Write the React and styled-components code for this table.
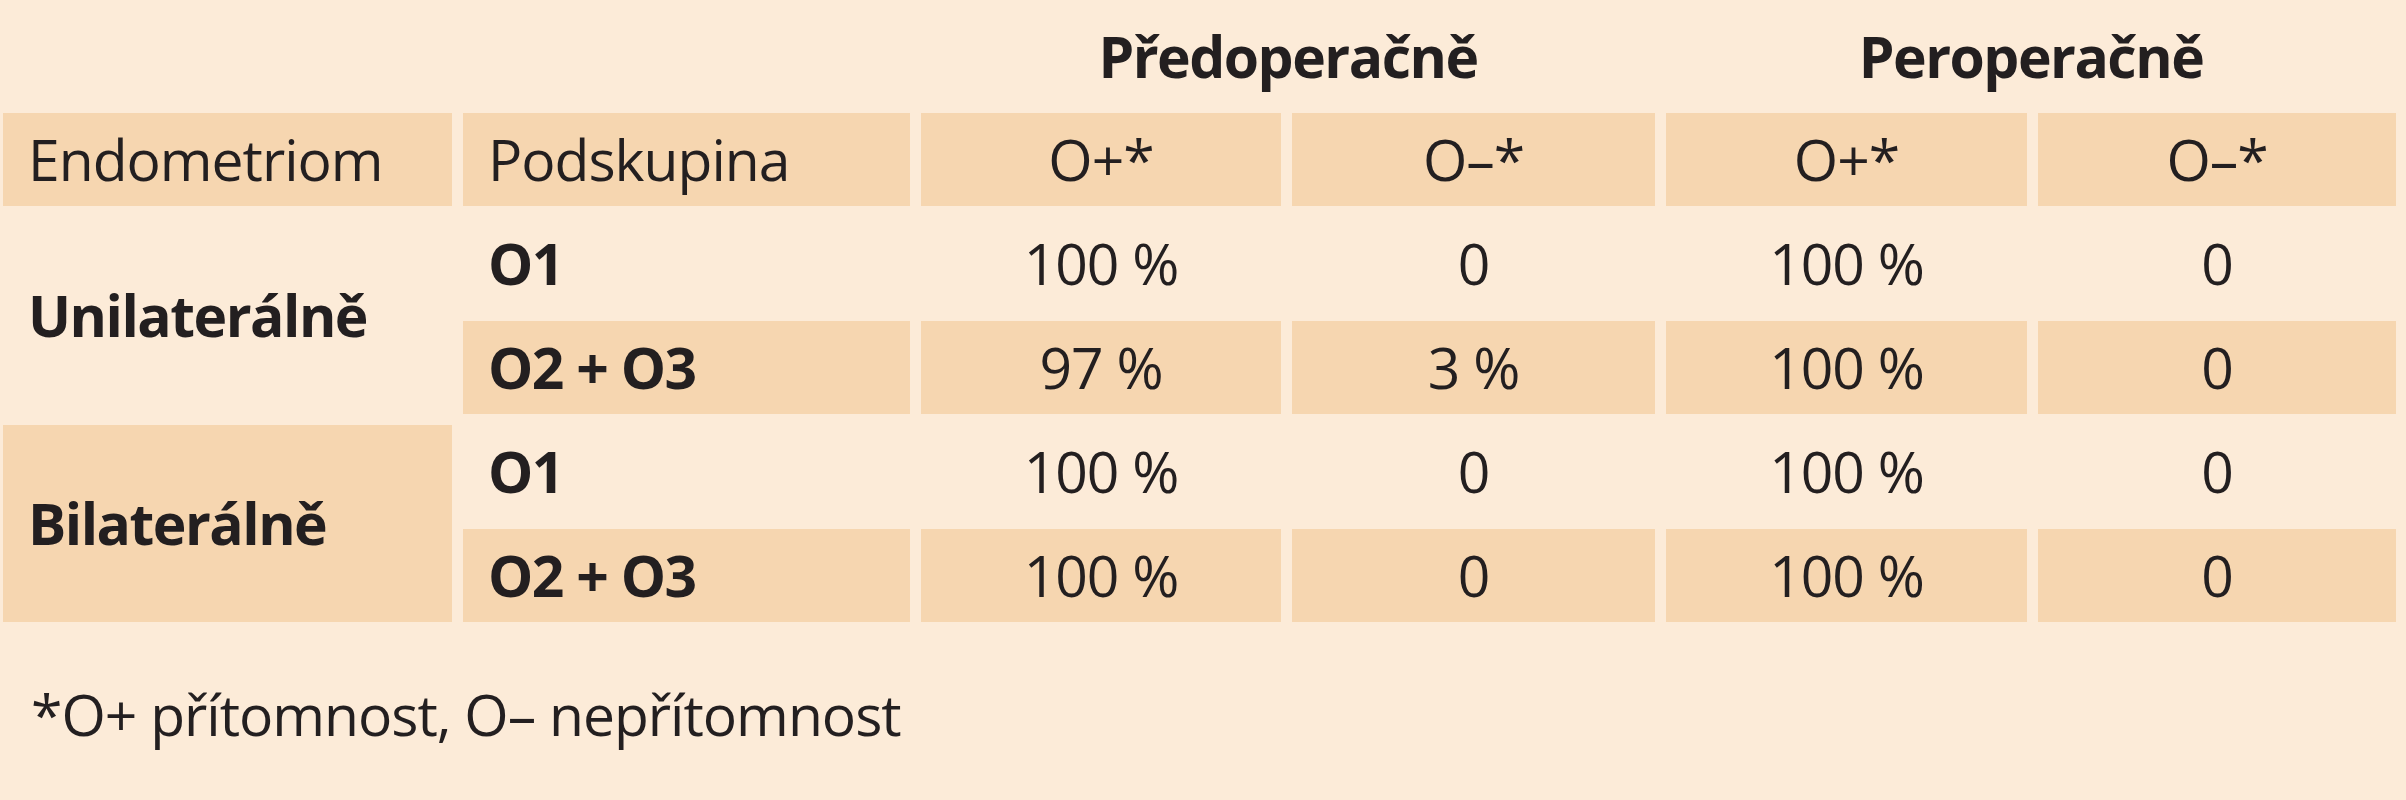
import React from "react";
import styled, { createGlobalStyle } from "styled-components";

const Global = createGlobalStyle`
  html, body { margin: 0; padding: 0; background: #fcebd8; }
  * { box-sizing: border-box; }
`;

const BAND = "#f6d6b0";

const Page = styled.div`
  width: 2406px;
  height: 800px;
  background: #fcebd8;
  padding-left: 3px;
  font-family: "Open Sans", "Noto Sans", sans-serif;
  color: #231f20;
  overflow: hidden;
`;

const Table = styled.div`
  display: grid;
  grid-template-columns: 449px 447px 360px 363px 361px 358px;
  grid-template-rows: 102px repeat(5, 93px);
  gap: 11px;
`;

const GroupHead = styled.div`
  grid-column: span 2;
  display: flex;
  align-items: center;
  justify-content: center;
  padding-top: 10px;
  font-size: 57px;
  font-weight: 700;
  letter-spacing: -1.5px;
  line-height: 1;
`;

const Blank = styled.div`
  grid-column: span 2;
`;

const Cell = styled.div`
  display: flex;
  align-items: center;
  justify-content: ${(p) => (p.$left ? "flex-start" : "center")};
  padding-left: ${(p) => (p.$left ? "25px" : "0")};
  background: ${(p) => (p.$shade ? BAND : "transparent")};
  grid-row: ${(p) => (p.$span ? `span ${p.$span}` : "auto")};
  font-size: 57px;
  font-weight: ${(p) => (p.$bold ? 700 : 400)};
  letter-spacing: ${(p) => (p.$bold ? "-1.5px" : "-1px")};
  line-height: 1;
  white-space: nowrap;
`;

const Footnote = styled.div`
  margin-top: 64px;
  padding-left: 28px;
  font-size: 57px;
  letter-spacing: -1px;
  line-height: 1;
  white-space: nowrap;
`;

const groups = [
  {
    name: "Unilaterálně",
    shade: false,
    rows: [
      { sub: "O1", shade: false, v: ["100 %", "0", "100 %", "0"] },
      { sub: "O2 + O3", shade: true, v: ["97 %", "3 %", "100 %", "0"] },
    ],
  },
  {
    name: "Bilaterálně",
    shade: true,
    rows: [
      { sub: "O1", shade: false, v: ["100 %", "0", "100 %", "0"] },
      { sub: "O2 + O3", shade: true, v: ["100 %", "0", "100 %", "0"] },
    ],
  },
];

export default function App() {
  return (
    <Page>
      <Global />
      <Table>
        <Blank />
        <GroupHead>Předoperačně</GroupHead>
        <GroupHead>Peroperačně</GroupHead>

        <Cell $left $shade>Endometriom</Cell>
        <Cell $left $shade>Podskupina</Cell>
        <Cell $shade>O+*</Cell>
        <Cell $shade>O–*</Cell>
        <Cell $shade>O+*</Cell>
        <Cell $shade>O–*</Cell>

        {groups.map((g) =>
          g.rows.map((r, i) => (
            <React.Fragment key={g.name + i}>
              {i === 0 && (
                <Cell $left $bold $span={2} $shade={g.shade}>
                  {g.name}
                </Cell>
              )}
              <Cell $left $bold $shade={r.shade}>
                {r.sub}
              </Cell>
              {r.v.map((val, j) => (
                <Cell key={j} $shade={r.shade}>
                  {val}
                </Cell>
              ))}
            </React.Fragment>
          ))
        )}
      </Table>
      <Footnote>*O+ přítomnost, O– nepřítomnost</Footnote>
    </Page>
  );
}
